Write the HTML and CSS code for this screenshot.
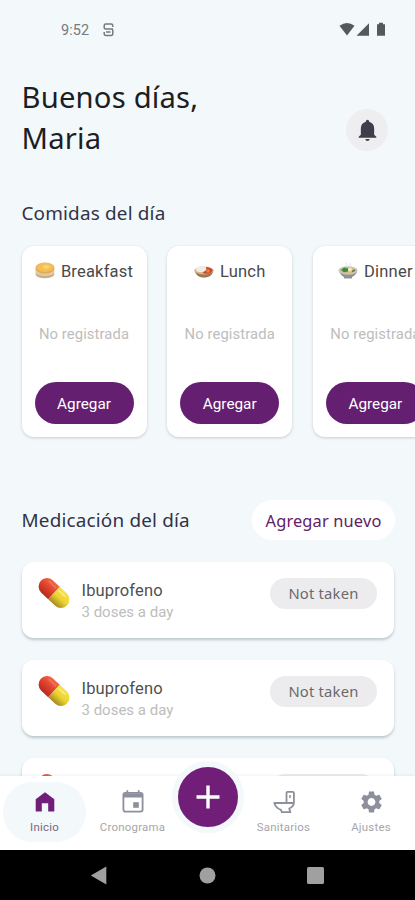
FILE: index.html
```html
<!DOCTYPE html>
<html lang="es">
<head>
<meta charset="utf-8">
<title>Inicio</title>
<link rel="stylesheet" href="styles.css">
</head>
<body>
<svg width="0" height="0" class="defs">
  <defs>
    <linearGradient id="red" x1="0" y1="0" x2="0" y2="1"><stop offset="0" stop-color="#f0694a"/><stop offset=".5" stop-color="#e0432c"/><stop offset="1" stop-color="#b52b22"/></linearGradient>
    <linearGradient id="yellow" x1="0" y1="0" x2="0" y2="1"><stop offset="0" stop-color="#f6e04f"/><stop offset=".5" stop-color="#ecd32f"/><stop offset="1" stop-color="#a48a22"/></linearGradient>
    <symbol id="pill" viewBox="0 0 32 32">
      <g transform="rotate(43 16 16)">
        <path d="M16 8.500H7.500a7.500 7.500 0 0 0 0 15H16z" fill="url(#red)"/>
        <path d="M16 8.500h8.500a7.500 7.500 0 0 1 0 15H16z" fill="url(#yellow)"/>
        <path d="M6 11.500h8" stroke="#f0705a" stroke-width="1.500" stroke-linecap="round"/>
        <path d="M18 11.500h7" stroke="#fbec80" stroke-width="1.500" stroke-linecap="round"/>
      </g>
    </symbol>
  </defs>
</svg>
<div class="phone">
  <header class="status">
    <div class="status-left">
      <span>9:52</span>
      <svg width="11" height="14" viewBox="0 0 11 14" fill="none" stroke="#777a7d" stroke-width="1.500"><path d="M9.700 4V2.300Q9.700 1 8.200 1H2.800Q1.200 1 1.200 2.500v2.300q0 1.200 1.500 1.200H8.300Q9.800 6 9.800 7.500v3Q9.800 12.500 8 12.500H3Q1.200 12.500 1.200 10.500V9M1.200 6H10M3 9h4.500"/></svg>
    </div>
    <svg width="48" height="16" viewBox="0 0 48 16" fill="#55595b"><path d="M.5 3.700Q8 -1.500 15.500 3.700L8 13.500z"/><path d="M30 1.300V13.800H17.500z"/><path d="M38 2.200h2V.8h4v1.400h2v11.600h-8z"/></svg>
  </header>
  <main class="content">
    <section class="greeting">
      <h1>Buenos días,<br>Maria</h1>
      <button class="bell" aria-label="Notificaciones">
        <svg width="19" height="23" viewBox="0 0 20 24" fill="#403c49"><path d="M10 .8c1 0 1.700.8 1.700 1.900C15 3.500 17 6.200 17 9.500v7l2.300 2.200v1H.7v-1L3 16.500v-7c0-3.300 2-6 5.300-6.800C8.300 1.600 9 .8 10 .8zM7.800 21h4.400c0 1.200-1 2-2.200 2s-2.200-.8-2.200-2z"/></svg>
      </button>
    </section>
    <h2 class="meals-title">Comidas del día</h2>
    <section class="meals">
      <article class="meal">
        <h3><svg width="20" height="18" viewBox="0 0 20 18"><path d="M.5 6v6c1 3 4 4.200 9.500 4.200s8.500-1.500 9.300-4.200V6z" fill="#dccaa9"/><path d="M.8 11.500c2 3 16 3.500 18.400 0v1.500c-2.200 4-16.300 4-18.400 0z" fill="#c8ad84"/><ellipse cx="10" cy="6" rx="9.500" ry="5.500" fill="#e6a94b"/><ellipse cx="10" cy="5.400" rx="8.500" ry="4.500" fill="#f6bf55"/><path d="M8 4l4-1 3 2-3 2-4-1z" fill="#fbd470"/></svg>Breakfast</h3>
        <p>No registrada</p><button>Agregar</button>
      </article>
      <article class="meal">
        <h3><svg width="20" height="18" viewBox="0 0 20 18"><path d="M.5 8.500C2 13 4.500 15.500 10 15.500s8.500-2.500 9.500-7z" fill="#9c7850"/><ellipse cx="10" cy="8.500" rx="9.600" ry="4" fill="#d6b491"/><path d="M10 5c6 0 9 2 8.500 4-1.500 3-7 3.500-9.500 2z" fill="#ce4528"/><path d="M2 8c0-3 3-4 6-4 4 0 5 2 4 4-2 3-9 3-10 0z" fill="#f0ece4"/><circle cx="14" cy="9" r="1.800" fill="#ef844b"/></svg>Lunch</h3>
        <p>No registrada</p><button>Agregar</button>
      </article>
      <article class="meal">
        <h3><svg width="20" height="18" viewBox="0 0 20 18"><path d="M.8 8.500C2 12.500 4.500 14 6 15v1.500h8V15c2-1 4.500-2.500 5.300-6.500z" fill="#8d9392"/><ellipse cx="10" cy="8.500" rx="9.500" ry="4.200" fill="#c2c6c3"/><ellipse cx="10" cy="8.300" rx="7.700" ry="3" fill="#d3bd83"/><path d="M3 8l3-2.500 4 1v3l-4 .8z" fill="#3f8b38"/><circle cx="12" cy="7.500" r="2" fill="#f3e7bd"/><path d="M14 9.500l3-1.500" stroke="#6a7547" stroke-width="1.500"/><path d="M8 .8q2 1.500 0 3M12 1.200q1.500 1.300 0 2.600" fill="none" stroke="#dedede"/></svg>Dinner</h3>
        <p>No registrada</p><button>Agregar</button>
      </article>
    </section>
    <section class="med-head">
      <h2>Medicación del día</h2>
      <button>Agregar nuevo</button>
    </section>
    <section class="meds">
      <article class="med"><svg class="pill" width="36" height="36"><use href="#pill"/></svg><div class="med-text"><h3>Ibuprofeno</h3><p>3 doses a day</p></div><span class="tag">Not taken</span></article>
      <article class="med"><svg class="pill" width="36" height="36"><use href="#pill"/></svg><div class="med-text"><h3>Ibuprofeno</h3><p>3 doses a day</p></div><span class="tag">Not taken</span></article>
      <article class="med"><svg class="pill" width="36" height="36"><use href="#pill"/></svg><div class="med-text"></div><span class="tag"></span></article>
    </section>
  </main>
  <nav class="tabs">
    <a class="tab active">
      <svg width="26" height="26" viewBox="0 0 26 26"><path d="M3.700 10.300L13 3.200l9.300 7.100v12.200h-6.100v-8.200H9.800v8.200H3.700z" fill="#701e78"/></svg>
      <span>Inicio</span>
    </a>
    <a class="tab">
      <svg width="26" height="26" viewBox="0 0 26 26" fill="none" stroke="#8d8f9a" stroke-width="1.800"><rect x="3.400" y="3.800" width="19.200" height="18.800" rx="2"/><path d="M3.200 4.500h19.600v4H3.200z" fill="#8d8f9a" stroke="none"/><path d="M7.300 1.300v3M18.700 1.300v3"/><path d="M13.200 13.200h5.600v5.600h-5.600z" fill="#8d8f9a" stroke="none"/></svg>
      <span>Cronograma</span>
    </a>
    <div class="fab-slot"><button class="fab" aria-label="Agregar"><svg width="24" height="24" viewBox="0 0 24 24"><path d="M12 .5v23M.5 12h23" stroke="#fff" stroke-width="3.400"/></svg></button></div>
    <a class="tab">
      <svg width="26" height="26" viewBox="0 0 26 26" fill="none" stroke="#8d8f9a" stroke-width="1.800" stroke-linejoin="round"><path d="M15.500 14V4q0-1.200 1.200-1.200h5q1.200 0 1.200 1.200v9.500q0 4-4.700 6l1.200 3.700h-8.600l-.8-2.400Q5.200 19.500 3.200 14H22.500"/><path d="M19 6v3" stroke-width="1.500"/></svg>
      <span>Sanitarios</span>
    </a>
    <a class="tab">
      <svg width="27" height="27" viewBox="0 0 24 24" fill="#8d8f9a"><path d="M19.140 12.940c.04-.3.06-.61.06-.94 0-.32-.02-.64-.07-.94l2.030-1.580c.18-.14.23-.41.12-.61l-1.920-3.320c-.12-.22-.37-.29-.59-.22l-2.390.96c-.5-.38-1.030-.7-1.620-.94l-.36-2.540c-.04-.24-.24-.41-.48-.41h-3.840c-.24 0-.43.17-.47.41l-.36 2.540c-.59.24-1.130.57-1.620.94l-2.390-.96c-.22-.08-.47 0-.59.22L2.740 8.870c-.12.21-.08.47.12.61l2.030 1.580c-.05.3-.09.63-.09.94s.02.64.07.94l-2.030 1.580c-.18.14-.23.41-.12.61l1.920 3.320c.12.22.37.29.59.22l2.390-.96c.5.38 1.030.7 1.620.94l.36 2.540c.05.24.24.41.48.41h3.840c.24 0 .44-.17.47-.41l.36-2.540c.59-.24 1.130-.56 1.620-.94l2.390.96c.22.08.47 0 .59-.22l1.920-3.320c.12-.22.07-.47-.12-.61l-2.010-1.580zM12 15.600c-1.980 0-3.600-1.620-3.600-3.600s1.620-3.600 3.600-3.600 3.600 1.620 3.600 3.600-1.620 3.600-3.600 3.600z"/></svg>
      <span>Ajustes</span>
    </a>
  </nav>
  <footer class="system">
    <svg width="17" height="19" viewBox="0 0 17 19"><path d="M16.300.5v18L.8 9.500z" fill="#a0a0a0"/></svg>
    <svg width="17" height="17" viewBox="0 0 17 17"><circle cx="8.500" cy="8.500" r="8" fill="#a0a0a0"/></svg>
    <svg width="17" height="17" viewBox="0 0 17 17"><rect width="17" height="17" rx="1.500" fill="#a0a0a0"/></svg>
  </footer>
</div>
</body>
</html>
```
FILE: styles.css
```css
* { box-sizing: border-box; margin: 0; padding: 0; }
body { background: #f3f8fb; font-family: Roboto, sans-serif; overflow: hidden; }
button { border: 0; font-family: inherit; }
h1, h2, h3 { font-weight: 400; }
svg { display: block; flex: none; }
.defs { position: absolute; }
.phone { width: 415px; height: 900px; display: flex; flex-direction: column; overflow: hidden; }

.status { height: 60px; flex: none; display: flex; justify-content: space-between; align-items: center; padding: 0 28px 0 61px; color: #777a7d; font-size: 14.500px; letter-spacing: .1px; }
.status-left { display: flex; align-items: center; gap: 14px; }

.content { flex: 1; min-height: 0; overflow: hidden; padding: 17px 0 0 21.500px; }
.greeting { height: 82px; display: flex; justify-content: space-between; padding-right: 27px; }
.greeting h1 { font-family: "Noto Sans", sans-serif; font-size: 29.200px; line-height: 40.500px; letter-spacing: .2px; color: #1c1e22; }
.bell { width: 42px; height: 42px; margin-top: 32px; border-radius: 50%; background: #eeeef1; display: flex; align-items: center; justify-content: center; }
h2 { font-family: "Noto Sans", sans-serif; font-size: 18.900px; line-height: 28px; letter-spacing: .18px; color: #303249; }
.meals-title { margin-top: 40px; }

.meals { display: flex; gap: 20.700px; margin-top: 19px; }
.meal { width: 125px; height: 191px; flex: none; background: #fff; border-radius: 12px; box-shadow: 0 1px 3px rgba(60, 80, 95, .25); display: flex; flex-direction: column; align-items: center; padding-top: 12px; }
.meal h3 { display: flex; align-items: center; gap: 6px; height: 26px; font-size: 16.500px; letter-spacing: .2px; color: #494949; }
.meal p { margin-top: 39px; line-height: 22px; font-size: 14.800px; letter-spacing: .1px; color: #bdbdbd; white-space: nowrap; }
.meal button { width: 99px; height: 42px; margin-top: 37px; padding-top: 2px; border-radius: 21px; background: #641f70; color: #fff; font-size: 15.300px; }

.med-head { display: flex; align-items: center; justify-content: space-between; height: 40px; margin: 63px 20px 0 0; }
.med-head button { width: 143px; height: 40px; border-radius: 20px; background: #fff; color: #602064; font: 16.400px "Noto Sans", sans-serif; letter-spacing: .15px; }
.meds { display: flex; flex-direction: column; gap: 22px; margin: 22px 21px 0 0; }
.med { height: 76px; flex: none; display: flex; background: #fff; border-radius: 12px; box-shadow: 0 2px 3px rgba(60, 90, 100, .3); padding: 16px 17px 0 16px; }
.pill { margin: -3px -2px 0; }
.med-text { flex: 1; padding: 1px 0 0 12px; }
.med-text h3 { font-size: 16.500px; line-height: 23px; letter-spacing: .15px; color: #505050; }
.med-text p { font-size: 15px; line-height: 20px; color: #bdbdbd; }
.tag { width: 107px; height: 31px; border-radius: 16px; background: #ececee; color: #6a6a6a; font: 14.800px/31px "Noto Sans", sans-serif; letter-spacing: .2px; text-align: center; }

.tabs { height: 74px; flex: none; position: relative; display: grid; grid-template-columns: 89px 87px 64px 87px 88px; background: #fff; box-shadow: 0 -1px 2px rgba(60, 80, 95, .08); }
.tab { display: flex; flex-direction: column; align-items: center; margin: 6px 3px 8px; padding-top: 7px; border-radius: 30px; font-size: 11.400px; letter-spacing: .25px; color: #a6a6aa; }
.tab svg { height: 26px; }
.tab span { line-height: 16px; margin-top: 4px; }
.tab.active { background: #f3f8fb; color: #746779; }
.fab-slot { display: flex; justify-content: center; }
.fab { width: 72px; height: 72px; flex: none; margin-top: -15px; border: 6.500px solid #f3f8fb; border-radius: 50%; background: #701e78; display: flex; align-items: center; justify-content: center; }

.system { height: 50px; flex: none; background: #000; display: flex; align-items: center; justify-content: center; gap: 91.500px; padding-right: 1px; }
```
